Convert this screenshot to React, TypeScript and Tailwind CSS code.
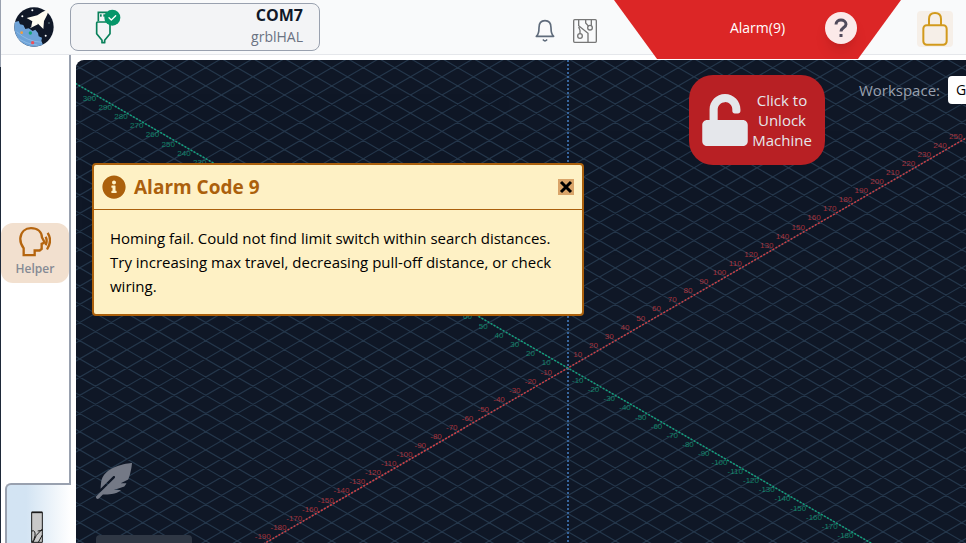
import React from "react";
import { FaFeatherAlt, FaInfoCircle, FaUnlock } from "react-icons/fa";

const STEP_X = 15.75;
const STEP_Y = 9.1;
const ORIGIN_X = 492;
const ORIGIN_Y = 308;

const range = (from: number, to: number) =>
  Array.from({ length: to - from + 1 }, (_, i) => from + i);

function Logo() {
  return (
    <svg viewBox="0 0 120 120" className="size-10 shrink-0" aria-label="gSender">
      <defs>
        <clipPath id="logo-disc">
          <circle cx="60" cy="60" r="59" />
        </clipPath>
      </defs>
      <circle cx="60" cy="60" r="59" fill="#101828" />
      <g clipPath="url(#logo-disc)">
        <path d="M0 46 L14 42 L18 52 L28 54 L34 66 L44 64 L56 72 L64 68 L72 78 L74 88 L84 92 L82 102 L90 120 L0 120Z" fill="#6ea3d8" />
        <path d="M8 74 Q40 104 84 106 M4 88 Q36 112 70 114" stroke="#9cc4ea" strokeWidth="2" fill="none" />
      </g>
      <path d="M105 6 Q84 14 70 25 L38 33 L55 43 L52 57 L72 50 L88 66 L90 42 Q101 24 105 6Z" fill="#fffdf2" />
      <path d="M62 45 L48 64 L72 52Z" fill="#fffdf2" />
      <circle cx="23" cy="77" r="4" fill="#f59e3b" />
      <circle cx="49" cy="78" r="5" fill="#12a474" />
      <circle cx="56" cy="107" r="5" fill="#ee4f5a" />
      <circle cx="55" cy="10" r="3" fill="#fff" />
      <circle cx="25" cy="28" r="3" fill="#fff" />
      <circle cx="95" cy="86" r="3" fill="#fff" />
      <circle cx="105" cy="48" r="2" fill="#8aa" />
    </svg>
  );
}

function UsbIcon() {
  return (
    <svg viewBox="0 0 78 108" className="h-9 w-[26px]" fill="none" aria-hidden="true">
      <path d="M10 36V10H34V36" stroke="#08805a" strokeWidth="5" />
      <rect x="15" y="16" width="5" height="7" fill="#08805a" />
      <rect x="25" y="16" width="5" height="7" fill="#08805a" />
      <path d="M7 39H42L45 42V74L29 94V101H21V94L5 74V42Z" stroke="#08805a" strokeWidth="5" strokeLinejoin="round" />
      <circle cx="52" cy="26" r="24" fill="#059669" />
      <path d="M42 26L49 33L62 20" stroke="#fff" strokeWidth="4" strokeLinecap="round" strokeLinejoin="round" />
    </svg>
  );
}

function BellIcon() {
  return (
    <svg viewBox="0 0 60 72" className="h-6 w-5" fill="none" stroke="#5f6b7b" strokeWidth="5" strokeLinejoin="round" aria-hidden="true">
      <path d="M4 52H56C49 46 48 39 48 26C48 13 41 5 30 5S12 13 12 26C12 39 11 46 4 52Z" />
      <path d="M25 63Q30 68 35 63" strokeLinecap="round" />
    </svg>
  );
}

function CircuitIcon() {
  return (
    <svg viewBox="0 0 72 72" className="size-6" fill="none" stroke="#777" strokeWidth="4" aria-hidden="true">
      <rect x="2" y="2" width="68" height="68" rx="3" />
      <path d="M17 2V20L45 43V70M21 45V34L17 24M38 2V12L47 22" />
      <circle cx="21" cy="51" r="7" />
      <circle cx="51" cy="26" r="7" />
      <path d="M55 20V2" />
    </svg>
  );
}

function PadlockIcon() {
  return (
    <svg viewBox="0 0 84 108" className="h-9 w-7" fill="none" stroke="#d29a1c" strokeWidth="6" aria-hidden="true">
      <rect x="7" y="43" width="70" height="58" rx="10" />
      <path d="M24 43V24C24 12 31 6 42 6S60 12 60 24V43" />
    </svg>
  );
}

function VoiceIcon() {
  return (
    <svg viewBox="0 0 96 92" className="h-[31px] w-8" fill="none" stroke="#b5650f" strokeWidth="7" aria-hidden="true">
      <path d="M14 87V66Q3 53 4 36C6 17 19 6 36 6C55 6 68 17 69 34L77 49L68 53V68L62 73H47V87Z" />
      <path d="M80 32Q86 44 80 57M86 20Q101 43 84 70" />
    </svg>
  );
}

function EndMill() {
  return (
    <svg viewBox="0 0 36 96" className="h-8 w-3" fill="#c9c9c9" stroke="#1a1a1a" strokeWidth="3" aria-hidden="true">
      <path d="M2 4H34V94H2Z" />
      <path d="M2 4H34" strokeWidth="5" />
      <path d="M2 60Q14 56 12 74Q10 88 2 94M34 54Q12 72 6 94M34 72L22 94M20 60L34 58" fill="none" />
    </svg>
  );
}

function AxisLabels({ color, slope, ticks }: { color: string; slope: 1 | -1; ticks: number[] }) {
  return (
    <g fill={color} fontSize="8" textAnchor="middle" opacity="0.75">
      {ticks
        .filter((n) => n !== 0)
        .map((n) => (
          <text
            key={n}
            x={ORIGIN_X + n * STEP_X - 6}
            y={ORIGIN_Y + n * STEP_Y * slope + (slope === 1 ? 6 : -2)}
          >
            {n * 10 * -slope}
          </text>
        ))}
    </g>
  );
}

function Visualizer() {
  const reach = 160;
  const dx = reach * STEP_X;
  const dy = reach * STEP_Y;
  const grid = range(-60, 60)
    .map((n) => {
      const y = ORIGIN_Y + n * STEP_Y * 2;
      return `M${ORIGIN_X - dx} ${y - dy}L${ORIGIN_X + dx} ${y + dy}M${ORIGIN_X - dx} ${y + dy}L${ORIGIN_X + dx} ${y - dy}`;
    })
    .join("");
  return (
    <svg className="absolute inset-0 size-full font-['Liberation_Sans',sans-serif]" aria-label="Toolpath visualizer">
      <path d={grid} stroke="#24364a" strokeWidth="1.2" fill="none" />
      <line x1={ORIGIN_X} x2={ORIGIN_X} y1="0" y2="100%" stroke="#37659c" strokeWidth="2" strokeDasharray="2 2" />
      <line x1={ORIGIN_X - dx} y1={ORIGIN_Y + dy} x2={ORIGIN_X + dx} y2={ORIGIN_Y - dy} stroke="#cf3f44" strokeWidth="1.5" strokeDasharray="2 1.5" />
      <line x1={ORIGIN_X - dx} y1={ORIGIN_Y - dy} x2={ORIGIN_X + dx} y2={ORIGIN_Y + dy} stroke="#12a37c" strokeWidth="1.5" strokeDasharray="2 1.5" />
      <AxisLabels color="#d33a40" slope={-1} ticks={range(-19, 25)} />
      <AxisLabels color="#12a37c" slope={1} ticks={range(-30, 18)} />
    </svg>
  );
}

function Header() {
  return (
    <header className="relative z-10 flex h-[55px] shrink-0 items-start border-b border-gray-200 bg-gray-50 px-[13px]">
      <div className="pt-[7px]">
        <Logo />
      </div>
      <button className="ml-4 mt-[3px] flex h-12 w-[250px] items-center justify-between rounded-lg border border-gray-400 bg-gray-100 pl-6 pr-4">
        <UsbIcon />
        <span className="flex flex-col items-end leading-5">
          <span className="font-bold text-gray-900">COM7</span>
          <span className="text-sm leading-6 text-gray-500">grblHAL</span>
        </span>
      </button>
      <div className="ml-auto flex shrink-0 items-start">
        <button aria-label="Notifications" className="mt-[19px]">
          <BellIcon />
        </button>
        <button aria-label="Controller pins" className="ml-[18px] mt-[19px]">
          <CircuitIcon />
        </button>
        <div className="ml-[17px] grid h-[59px] w-[287px] grid-cols-[1fr_auto_1fr] items-center bg-[#dc2626] pb-1 text-sm text-white [clip-path:polygon(0_0,100%_0,85%_100%,15%_100%)]">
          <span className="col-start-2">Alarm(9)</span>
          <button aria-label="Alarm help" className="ml-10 grid size-8 place-items-center rounded-full bg-[#fbe9e9] shadow-lg">
            <svg viewBox="0 0 24 24" className="size-6" fill="none" stroke="#514b5c" strokeWidth="3" aria-hidden="true">
              <path d="M7 8.5C7 5.500 9.5 4 12 4S17 5.500 17 8.200C17 11.500 12 11.500 12 15.500" />
              <path d="M12 18V21" />
            </svg>
          </button>
        </div>
        <button aria-label="Lock interface" className="ml-4 mt-[11px] grid h-9 w-9 place-items-center rounded bg-[#f6efe8]">
          <PadlockIcon />
        </button>
      </div>
    </header>
  );
}

function Sidebar() {
  return (
    <aside className="flex w-[70px] shrink-0 flex-col">
      <div className="flex flex-1 flex-col border-r-2 border-gray-400 pt-[168px]">
        <button className="flex h-[60px] w-full flex-col items-center rounded-xl bg-[#f2e0cf] pt-[3px] text-xs text-[#858a94]">
          <VoiceIcon />
          <span className="mt-1 font-semibold">Helper</span>
        </button>
      </div>
      <div className="ml-1 flex h-[60px] justify-center rounded-tl-md border-l-2 border-t-2 border-gray-400 bg-linear-to-r from-[#d3e4f3] from-30% to-white pr-1 pt-[26px]">
        <EndMill />
      </div>
    </aside>
  );
}

function AlarmDialog() {
  return (
    <section role="alertdialog" aria-labelledby="alarm-title" className="absolute left-4 top-[103px] w-[492px] rounded border-2 border-[#ab600c] bg-[#fef1c5]">
      <div className="flex h-[45px] items-center border-b border-[#ab600c] px-2">
        <FaInfoCircle className="size-6 text-[#ab600c]" />
        <h2 id="alarm-title" className="ml-2 pt-px text-[19px] font-bold text-[#ab600c]">Alarm Code 9</h2>
        <button aria-label="Close" className="ml-auto grid size-4 place-items-center bg-[#d9a469]">
          <svg viewBox="0 0 16 16" className="size-4" stroke="#000" strokeWidth="3" aria-hidden="true">
            <path d="M3 3L13 13M13 3L3 13" />
          </svg>
        </button>
      </div>
      <p className="p-4 text-[15px] leading-6 text-black">
        Homing fail. Could not find limit switch within search distances. Try increasing max travel, decreasing pull-off distance, or check wiring.
      </p>
    </section>
  );
}

export default function App() {
  return (
    <div className="flex h-screen overflow-hidden bg-white font-['Open_Sans','Noto_Sans',sans-serif]">
      <div className="flex w-px shrink-0 flex-col bg-gray-800">
        <div className="h-[67px] bg-gray-400" />
      </div>
      <div className="flex min-w-0 flex-1 flex-col">
        <Header />
        <div className="flex min-h-0 flex-1">
          <Sidebar />
          <main className="relative ml-[5px] mt-[5px] min-w-0 flex-1 overflow-hidden rounded-tl-lg bg-[#0f1726]">
            <Visualizer />
            <button className="absolute left-[613px] top-[15px] flex h-[90px] w-[136px] items-center justify-center gap-1 rounded-3xl bg-[#b82024] text-[15px] font-medium leading-5 text-gray-200">
              <FaUnlock className="h-[52px] w-[46px] shrink-0" />
              <span className="w-[60px]">Click to Unlock Machine</span>
            </button>
            <div className="absolute -right-20 top-4 flex items-center gap-2 text-gray-400">
              <label htmlFor="workspace" className="text-[15px]">Workspace:</label>
              <select id="workspace" defaultValue="G54" className="h-7 w-[98px] appearance-none rounded bg-white px-2 text-sm text-black">
                <option>G54</option>
                <option>G55</option>
              </select>
            </div>
            <AlarmDialog />
            <FaFeatherAlt className="absolute left-5 top-[403px] size-9 text-[#747986]" />
            <div className="absolute left-5 top-[475px] h-10 w-24 rounded-t bg-[#2f3744]" />
          </main>
        </div>
      </div>
    </div>
  );
}
